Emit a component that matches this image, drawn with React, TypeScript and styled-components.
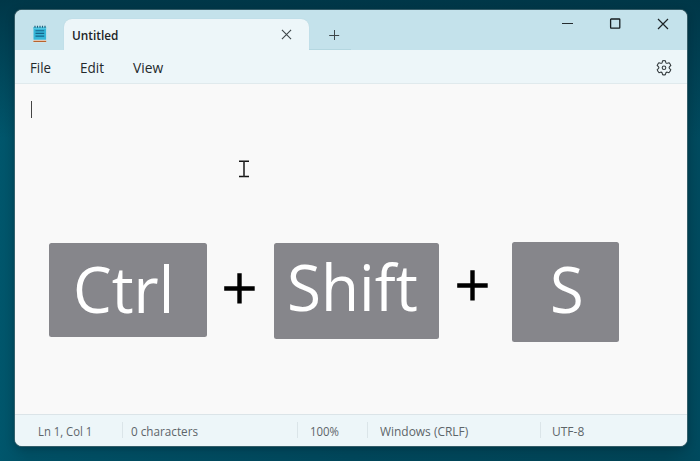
import React from "react";
import styled, { createGlobalStyle } from "styled-components";

const GlobalStyle = createGlobalStyle`
  * { box-sizing: border-box; }
  body { margin: 0; overflow: hidden; font-family: "Open Sans", "Noto Sans", sans-serif; }
`;

const Desktop = styled.main`
  width: 700px;
  height: 461px;
  padding: 10px 13px 15px 15px;
  background:
    linear-gradient(180deg, #003748 0%, rgba(0, 55, 72, 0) 30%),
    linear-gradient(90deg, #00566c 0%, #004f64 4%, #00465a 50%, #004355 95%, #004a5e 100%);
`;

const Window = styled.section`
  display: flex;
  flex-direction: column;
  width: 672px;
  height: 436px;
  border-radius: 7px;
  overflow: hidden;
  background: #f9f9f9;
  box-shadow: 0 0 0 1px rgba(70, 105, 115, 0.75), 0 2px 8px rgba(0, 20, 30, 0.35);
`;

const TitleBar = styled.header`
  display: flex;
  flex: 0 0 40px;
  background: #c4e2eb;
`;

const AppIcon = styled.div`
  width: 49px;
  padding: 15px 0 0 18px;
  svg { display: block; }
`;

const Tab = styled.div`
  display: flex;
  justify-content: space-between;
  width: 245px;
  height: 31px;
  margin-top: 9px;
  padding: 0 17px 0 8px;
  border-radius: 8px 8px 0 0;
  background: #edf6f9;
  box-shadow: 0 0 1px #a9ccd6;
`;

const TextRun = styled.span<{ $size: number; $weight?: number; $stretch?: number }>`
  display: inline-block;
  font-size: ${(p) => p.$size}px;
  font-weight: ${(p) => p.$weight ?? 400};
  transform: scaleX(${(p) => p.$stretch ?? 1});
  transform-origin: left center;
  white-space: nowrap;
`;

const TabTitle = styled.div`
  line-height: 30px;
  color: #1c2326;
`;

const CloseTab = styled.div`
  padding-top: 10px;
  svg { display: block; }
`;

const NewTab = styled.div`
  width: 42px;
  padding: 19px 0 0 19px;
  border-bottom: 1px solid #b4d7e0;
  svg { display: block; }
`;

const WindowControls = styled.div`
  display: flex;
  gap: 36px;
  margin-left: auto;
  padding: 8px 18px 0 0;
  svg { display: block; }
`;

const MenuBar = styled.nav`
  display: flex;
  flex: none;
  height: 34px;
  padding-left: 15px;
  border-bottom: 1px solid #e0eaed;
  background: #edf6f9;
  color: #24292b;
`;

const MenuItem = styled.div<{ $width: number }>`
  width: ${(p) => p.$width}px;
  line-height: 35px;
`;

const Settings = styled.div`
  margin-left: auto;
  padding: 10px 15px 0 0;
  svg { display: block; }
`;

const Editor = styled.div`
  flex: 1;
  display: flex;
  flex-direction: column;
  background: #f9f9f9;
`;

const Caret = styled.div`
  width: 1px;
  height: 17px;
  margin: 17px 0 0 16px;
  background: #454545;
`;

const Pointer = styled.div`
  margin: 42px 0 0 223px;
  svg { display: block; }
`;

const Shortcut = styled.div`
  display: flex;
  align-items: flex-start;
  margin: 64px 0 0 33.5px;
`;

const KeyCap = styled.div<{ $width: number; $height: number; $top: number; $inset: number; $line: number }>`
  width: ${(p) => p.$width}px;
  height: ${(p) => p.$height}px;
  margin-top: ${(p) => p.$top}px;
  padding-left: ${(p) => p.$inset}px;
  border-radius: 2.5px;
  background: #86868b;
  color: #fff;
  line-height: ${(p) => p.$line}px;
`;

const Plus = styled.div<{ $left: number; $right: number; $top: number }>`
  margin: ${(p) => `${p.$top}px ${p.$right}px 0 ${p.$left}px`};
  svg { display: block; }
`;

const StatusBar = styled.footer`
  display: flex;
  align-items: flex-start;
  flex: none;
  height: 32px;
  padding-top: 7px;
  border-top: 1px solid #dbe4e8;
  background: #edf6f9;
  color: #5d6569;
`;

const StatusCell = styled.div<{ $width: number; $inset: number }>`
  width: ${(p) => p.$width}px;
  height: 16px;
  padding-left: ${(p) => p.$inset}px;
  line-height: 16px;
  & + & { border-left: 1px solid #dbe5e9; }
`;

const PlusSign = () => (
  <svg width="31" height="31" viewBox="0 0 31 31">
    <path d="M15.5 .2V30.6M.2 15.5H30.7" stroke="#000" strokeWidth="4.4" />
  </svg>
);

const NotepadIcon = () => (
  <svg width="14" height="18" viewBox="0 0 14 18">
    <path d="M.4 14.5h12.8v2.8H.4z" fill="#f2e6dc" />
    <path d="M.4 16.4h12.8" stroke="#b8632c" strokeWidth="1.2" />
    <path d="M.5 2h12.6v12.8H.5z" fill="#35b6d8" />
    <path d="M.5 2h12.6v2H.5z" fill="#55c8e2" />
    <path d="M2.5 5.7h8.7M2.5 8.4h8.7M2.5 11.1h8.7" stroke="#14668a" strokeWidth="1.1" />
    <path d="M2 .7v2M4.5 .7v2M7 .7v2M9.5 .7v2M12 .7v2" stroke="#185e7a" strokeWidth="1.2" />
  </svg>
);

const CrossIcon = ({ size, stroke }: { size: number; stroke: string }) => (
  <svg width={size} height={size} viewBox="0 0 12 12">
    <path d="M1 1l10 10M11 1L1 11" fill="none" stroke={stroke} strokeWidth="1.2" />
  </svg>
);

const GearIcon = () => (
  <svg width="16" height="16" viewBox="0 0 16 16" fill="none" stroke="#353c3f" strokeWidth="1.1">
    <path
      d="M6.6 .8 Q8 .4 9.4 .8 L9.8 2.4 Q10.3 3.5 11.4 3.2 L13 2.7 Q14.3 4 14.8 5.5 L13.6 6.6 Q12.7 7.6 13.6 8.6 L14.8 9.7 Q14.3 11.5 13 12.7 L11.4 12.2 Q10.3 12 9.8 13.1 L9.4 14.7 Q8 15.1 6.6 14.7 L6.2 13.1 Q5.7 12 4.6 12.2 L3 12.7 Q1.7 11.4 1.2 9.7 L2.4 8.6 Q3.3 7.6 2.4 6.6 L1.2 5.5 Q1.7 4 3 2.7 L4.6 3.2 Q5.7 3.5 6.2 2.4 Z"
      strokeLinejoin="round"
    />
    <circle cx="8" cy="7.75" r="1.8" />
  </svg>
);

export default function App() {
  return (
    <>
      <GlobalStyle />
      <Desktop>
        <Window>
          <TitleBar>
            <AppIcon><NotepadIcon /></AppIcon>
            <Tab>
              <TabTitle><TextRun $size={12} $weight={600} $stretch={0.985}>Untitled</TextRun></TabTitle>
              <CloseTab><CrossIcon size={11} stroke="#3d4649" /></CloseTab>
            </Tab>
            <NewTab>
              <svg width="12" height="12" viewBox="0 0 12 12">
                <path d="M6.5 1v10M1.2 6.5h10" stroke="#3d4649" />
              </svg>
            </NewTab>
            <WindowControls>
              <svg width="12" height="12" viewBox="0 0 12 12"><path d="M1 5.5h11" stroke="#252c2f" /></svg>
              <svg width="12" height="12" viewBox="0 0 12 12">
                <rect x="1.6" y="1" width="9.2" height="9.2" rx=".6" fill="none" stroke="#171e21" strokeWidth="1.3" />
              </svg>
              <CrossIcon size={12} stroke="#1c2326" />
            </WindowControls>
          </TitleBar>
          <MenuBar>
            <MenuItem $width={50}><TextRun $size={13.8} $stretch={0.96}>File</TextRun></MenuItem>
            <MenuItem $width={53}><TextRun $size={13.8} $stretch={0.98}>Edit</TextRun></MenuItem>
            <MenuItem $width={50}><TextRun $size={13.8}>View</TextRun></MenuItem>
            <Settings><GearIcon /></Settings>
          </MenuBar>
          <Editor>
            <Caret />
            <Pointer>
              <svg width="12" height="18" viewBox="0 0 12 18">
                <path d="M1 1.2h4M7 1.2h4M1 16.5h4M7 16.5h4M4 1.2h4M4 16.5h4" stroke="#161616" strokeWidth="1.5" />
                <path d="M6 1.5v15" stroke="#333" strokeWidth="1.7" />
              </svg>
            </Pointer>
            <Shortcut>
              <KeyCap $width={158} $height={94} $top={1} $inset={24.5} $line={91}>
                <TextRun $size={64} $stretch={0.96}>Ctrl</TextRun>
              </KeyCap>
              <Plus $left={17} $right={19.5} $top={31}><PlusSign /></Plus>
              <KeyCap $width={165} $height={96} $top={1} $inset={13} $line={87}>
                <TextRun $size={64} $stretch={0.97}>Shift</TextRun>
              </KeyCap>
              <Plus $left={18} $right={24} $top={28}><PlusSign /></Plus>
              <KeyCap $width={107} $height={100} $top={0} $inset={38} $line={94}>
                <TextRun $size={64} $stretch={0.96}>S</TextRun>
              </KeyCap>
            </Shortcut>
          </Editor>
          <StatusBar>
            <StatusCell $width={107} $inset={23}><TextRun $size={12} $stretch={0.94}>Ln 1, Col 1</TextRun></StatusCell>
            <StatusCell $width={175} $inset={8}><TextRun $size={12} $stretch={0.975}>0 characters</TextRun></StatusCell>
            <StatusCell $width={70} $inset={12}><TextRun $size={12} $stretch={0.95}>100%</TextRun></StatusCell>
            <StatusCell $width={173} $inset={12}><TextRun $size={12} $stretch={0.995}>Windows (CRLF)</TextRun></StatusCell>
            <StatusCell $width={120} $inset={11}><TextRun $size={12}>UTF-8</TextRun></StatusCell>
          </StatusBar>
        </Window>
      </Desktop>
    </>
  );
}
